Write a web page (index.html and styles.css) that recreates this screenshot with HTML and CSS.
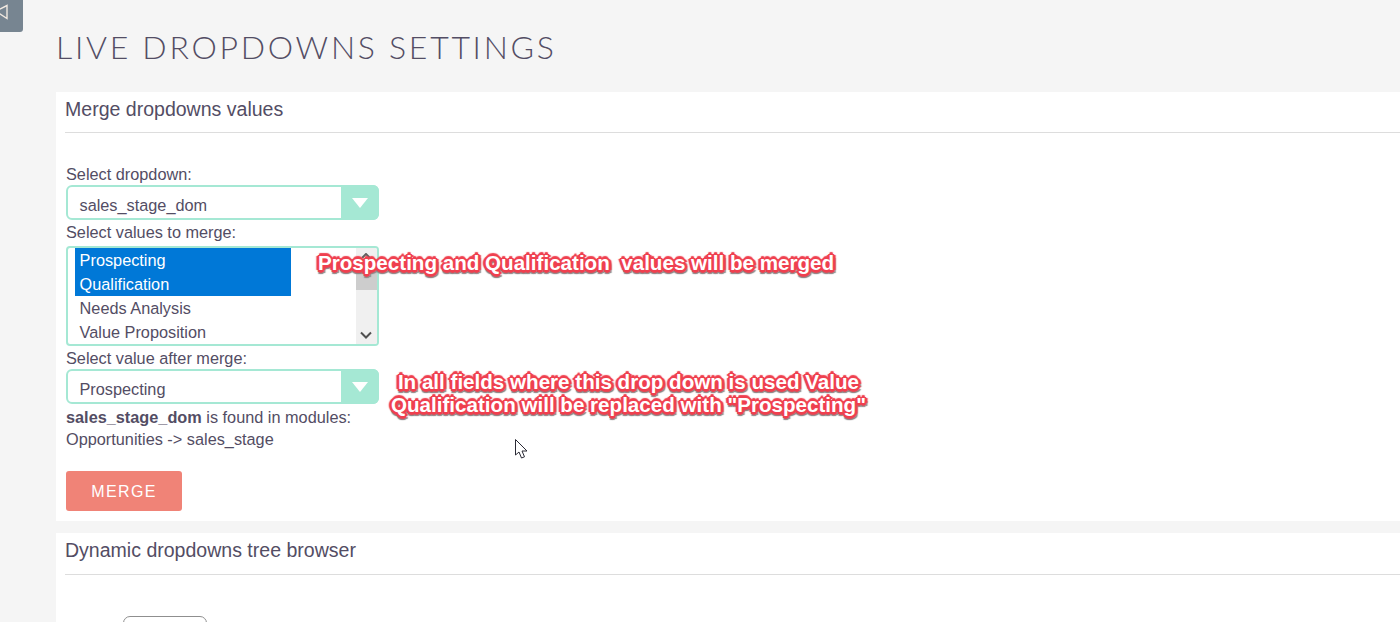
FILE: index.html
```html
<!DOCTYPE html>
<html lang="en">
<head>
<meta charset="utf-8">
<title>Live Dropdowns Settings</title>
<link rel="stylesheet" href="styles.css">
</head>
<body>
<div class="toggle"><svg width="10" height="16" viewBox="0 0 10 16"><path d="M7 1.5V14.5L0 10H-4V5H0Z" fill="none" stroke="#f0e8e0" stroke-width="1.4"/></svg></div>
<main class="main">
  <h1 class="title">LIVE DROPDOWNS SETTINGS</h1>
  <section class="panel panel-merge">
    <h2 class="panel-head">Merge dropdowns values</h2>
    <form class="form">
      <div class="label">Select dropdown:</div>
      <div class="select"><span class="select-value">sales_stage_dom</span><span class="select-btn"><i class="tri"></i></span></div>
      <div class="label">Select values to merge:</div>
      <div class="listbox">
        <div class="options">
          <div class="opt sel">Prospecting</div>
          <div class="opt sel">Qualification</div>
          <div class="opt">Needs Analysis</div>
          <div class="opt">Value Proposition</div>
        </div>
        <div class="scroll">
          <svg class="arrow-up" width="10" height="6" viewBox="0 0 10 6"><path d="M1 5L5 1L9 5" fill="none" stroke="#606060" stroke-width="2"/></svg>
          <div class="thumb"></div>
          <svg class="arrow-down" width="12" height="8" viewBox="0 0 12 8"><path d="M1 1.5L6 6.5L11 1.5" fill="none" stroke="#505050" stroke-width="2"/></svg>
        </div>
      </div>
      <div class="label">Select value after merge:</div>
      <div class="select select-last"><span class="select-value">Prospecting</span><span class="select-btn"><i class="tri"></i></span></div>
      <p class="found"><b>sales_stage_dom</b> is found in modules:</p>
      <p class="found">Opportunities -&gt; sales_stage</p>
      <button class="merge" type="button">MERGE</button>
    </form>
  </section>
  <section class="panel panel-tree">
    <h2 class="panel-head">Dynamic dropdowns tree browser</h2>
    <div class="tree-btn"></div>
  </section>
</main>
<div class="note note-one">Prospecting and Qualification&nbsp; values will be merged</div>
<div class="note note-two">In all fields where this drop down is used Value<br>Qualification will be replaced with "Prospecting"</div>
<svg class="cursor" width="13" height="20" viewBox="0 0 13 20"><path d="M.5 .5V16L4 13L6.5 19L9.5 17.8L7 12H12Z" fill="#fff" stroke="#2a2a35" stroke-width="1"/></svg>
</body>
</html>
```
FILE: styles.css
```css
* { box-sizing: border-box; }
html, body { margin: 0; height: 622px; overflow: hidden; }
body {
  position: relative;
  background: #f5f5f5;
  color: #534d64;
  font-family: "Liberation Sans", Arial, sans-serif;
  font-size: 16.3px;
}
.toggle {
  position: absolute;
  left: 0;
  top: 0;
  width: 23px;
  height: 32px;
  background: #778591;
  border-radius: 0 0 3px 0;
  overflow: hidden;
}
.toggle svg { position: absolute; left: 0; top: 4px; overflow: visible; }
.main { padding-left: 56px; }
.title {
  margin: 0;
  padding: 27px 0 0 0;
  height: 92px;
  font-family: Lato, sans-serif;
  font-weight: 300;
  font-size: 32px;
  line-height: 40px;
  letter-spacing: 2.72px;
  color: #534d64;
}
.panel { background: #fff; }
.panel-merge { height: 429px; margin-bottom: 12px; }
.panel-tree { height: 100px; }
.panel-head {
  margin: 0 0 0 9px;
  height: 41px;
  border-bottom: 1px solid #dddddd;
  font-size: 19.55px;
  font-weight: 400;
  line-height: 35px;
}
.panel-tree .panel-head { height: 42px; line-height: 35px; }
.form { padding: 32px 0 0 10px; width: 323px; }
.label { height: 20px; line-height: 18px; }
.select {
  display: flex;
  width: 313px;
  height: 35px;
  margin-bottom: 3px;
  border: 2px solid #a5e8d4;
  border-radius: 6px;
  background: #fff;
}
.select-last { margin-bottom: 0; }
.select-value { flex: 1; padding-left: 11.5px; line-height: 36px; }
.select-btn {
  width: 38px;
  margin: -2px;
  margin-left: 0;
  background: #a5e8d4;
  border-radius: 0 6px 6px 0;
  display: flex;
  align-items: center;
  justify-content: center;
}
.tri {
  width: 0;
  height: 0;
  border-left: 8px solid transparent;
  border-right: 8px solid transparent;
  border-top: 10px solid #fff;
}
.listbox {
  display: flex;
  width: 313px;
  height: 100px;
  margin-top: 3px;
  margin-bottom: 3px;
  border: 2px solid #a5e8d4;
  border-radius: 4px;
  overflow: hidden;
}
.options { width: 288px; padding-left: 7px; }
.opt { width: 216px; height: 24px; padding-left: 4.6px; line-height: 24px; }
.opt.sel { background: #0078d7; color: #fff; }
.scroll {
  position: relative;
  width: 21px;
  margin-left: 2px;
  background: #f0f0f0;
}
.arrow-up { position: absolute; left: 5px; top: 5px; }
.thumb { position: absolute; left: 0; right: 0; top: 16px; height: 26px; background: #cdcdcd; }
.arrow-down { position: absolute; left: 4px; bottom: 5px; }
.found { margin: 0; height: 22px; line-height: 22px; white-space: nowrap; }
.found:first-of-type { margin-top: 2px; }
.found b { font-weight: 700; }
.merge {
  display: block;
  width: 116px;
  height: 40px;
  margin-top: 21px;
  padding: 2px 0 0;
  border: 0;
  border-radius: 3px;
  background: #f08377;
  color: #fff;
  font-family: "Liberation Sans", Arial, sans-serif;
  font-size: 16px;
  letter-spacing: 1.4px;
}
.tree-btn {
  width: 84px;
  height: 30px;
  margin: 41px 0 0 67px;
  border: 1px solid #8f8f8f;
  border-radius: 7px;
  background: #fff;
}
.note {
  position: absolute;
  font-weight: 700;
  font-size: 20.6px;
  line-height: 23px;
  color: #fff;
  text-align: center;
  white-space: nowrap;
  text-shadow:
    2px 0 0 #ef404f, -2px 0 0 #ef404f, 0 2px 0 #ef404f, 0 -2px 0 #ef404f,
    1.5px 1.5px 0 #ef404f, -1.5px 1.5px 0 #ef404f, 1.5px -1.5px 0 #ef404f, -1.5px -1.5px 0 #ef404f,
    3px 0 1px #ef404f, -3px 0 1px #ef404f, 0 3px 1px #ef404f, 0 -3px 1px #ef404f,
    1px 4px 1px #8a8a8a, -1px 4px 1px #8a8a8a, 3px 3px 1px #8a8a8a;
}
.note-one { left: 318px; top: 251px; }
.note-two { left: 391px; top: 370px; }
.cursor { position: absolute; left: 515px; top: 439px; }
```
